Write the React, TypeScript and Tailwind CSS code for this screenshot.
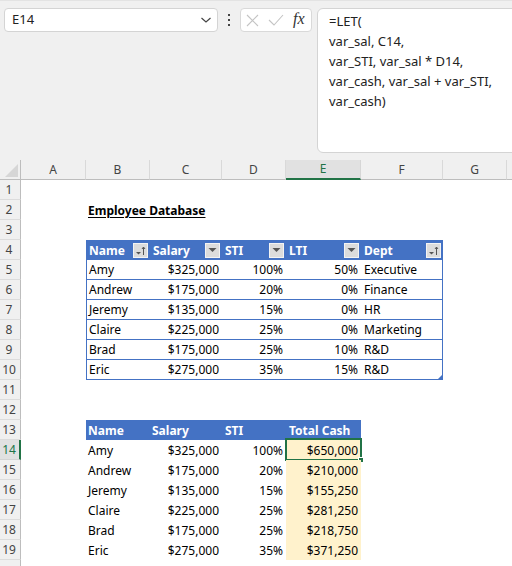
import React from 'react';

const GRID = 'grid grid-cols-[21px_65px_64px_72px_64px_75px_82px_64px_5px] h-[20px]';
const CELL = 'flex items-center whitespace-nowrap pt-[1px]';
const LINE = 'border-[#4472c4]';

const t1 = [
  ['Amy', '$325,000', '100%', '50%', 'Executive'],
  ['Andrew', '$175,000', '20%', '0%', 'Finance'],
  ['Jeremy', '$135,000', '15%', '0%', 'HR'],
  ['Claire', '$225,000', '25%', '0%', 'Marketing'],
  ['Brad', '$175,000', '25%', '10%', 'R&D'],
  ['Eric', '$275,000', '35%', '15%', 'R&D']
];

const t2 = [
  ['Amy', '$325,000', '100%', '$650,000'],
  ['Andrew', '$175,000', '20%', '$210,000'],
  ['Jeremy', '$135,000', '15%', '$155,250'],
  ['Claire', '$225,000', '25%', '$281,250'],
  ['Brad', '$175,000', '25%', '$218,750'],
  ['Eric', '$275,000', '35%', '$371,250']
];

function RowHead({ n, active }: { n?: number; active?: boolean }) {
  return active ? (
    <div className="flex items-center justify-center pr-[1px] bg-[#e1e1e1] text-[#217346] text-[12px] border-r-2 border-r-[#217346] border-b border-b-[#d4d4d4]">
      {n}
    </div>
  ) : (
    <div className="flex items-center justify-center pr-[2px] bg-[#f0f0f0] text-[#444] text-[12px] border-r border-r-[#bdbdbd] border-b border-b-[#dcdcdc]">
      {n}
    </div>
  );
}

function FilterBtn({ sort }: { sort?: boolean }) {
  return (
    <div className="w-[15px] h-[15px] bg-[#dcdcdc] border border-[#f3f3f3] flex items-center justify-center">
      {sort ? (
        <svg width="13" height="13" viewBox="0 0 13 13">
          <polygon points="2,8 7,8 4.5,10.5" fill="#555" />
          <path d="M9.5 11V3M8 5l1.5-2 1.5 2" stroke="#555" strokeWidth="1" fill="none" />
        </svg>
      ) : (
        <svg width="9" height="6" viewBox="0 0 9 6">
          <polygon points="0.5,1 8.5,1 4.5,5" fill="#555" />
        </svg>
      )}
    </div>
  );
}

function HeadCell({ label, sort }: { label: string; sort?: boolean }) {
  return (
    <div className="flex items-center whitespace-nowrap justify-between bg-[#4472c4] text-white font-bold pl-[3px] pr-[2px]">
      <span className="pt-[1px]">{label}</span>
      <FilterBtn sort={sort} />
    </div>
  );
}

function FormulaBar() {
  return (
    <div className="h-[160px] bg-[#f0f0f0] border-t border-[#e3e3e3] flex items-start pt-[7px] pl-[4px] font-['Noto_Sans',sans-serif] text-[13px] text-[#222]">
      <div className="w-[214px] h-[24px] shrink-0 bg-white rounded-[4px] border border-[#d4d4d4] flex items-center justify-between pl-[7px] pr-[5px]">
        <span>E14</span>
        <svg width="12" height="8" viewBox="0 0 12 8">
          <path d="M1.5 2l4.5 4 4.5-4" stroke="#444" strokeWidth="1.2" fill="none" />
        </svg>
      </div>
      <div className="w-[22px] h-[24px] shrink-0 flex flex-col items-center justify-center gap-[3px]">
        <span className="w-[2px] h-[2px] bg-[#444]" />
        <span className="w-[2px] h-[2px] bg-[#444]" />
        <span className="w-[2px] h-[2px] bg-[#444]" />
      </div>
      <div className="w-[72px] h-[24px] shrink-0 bg-white rounded-[4px] border border-[#d9d9d9] flex items-center pl-[5px] gap-[9px]">
        <svg width="13" height="13" viewBox="0 0 13 13">
          <path d="M1 1l11 11M12 1L1 12" stroke="#c4c4c4" strokeWidth="1.1" />
        </svg>
        <svg width="16" height="12" viewBox="0 0 16 12">
          <path d="M1 6l5 5 9-10" stroke="#c4c4c4" strokeWidth="1.1" fill="none" />
        </svg>
        <span className="font-['Liberation_Serif',serif] italic text-[16px] leading-none text-[#333] -mt-[2px]">fx</span>
      </div>
      <div className="ml-[5px] w-[210px] h-[145px] shrink-0 bg-white rounded-[6px] border border-[#d4d4d4] pl-[11px] pt-[2px] leading-[20px]">
        <div>=LET(</div>
        <div>var_sal, C14,</div>
        <div>var_STI, var_sal * D14,</div>
        <div>var_cash, var_sal + var_STI,</div>
        <div>var_cash)</div>
      </div>
    </div>
  );
}

function ColHeads() {
  const letters = ['A', 'B', 'C', 'D', 'E', 'F', 'G'];
  return (
    <div className={`${GRID} font-['Noto_Sans',sans-serif] text-[12px] text-[#444]`}>
      <div className="bg-[#f0f0f0] border-b border-r border-[#bdbdbd] flex items-end justify-end p-[2px]">
        <svg width="13" height="13" viewBox="0 0 13 13">
          <polygon points="13,0 13,13 0,13" fill="#d6d6d6" />
        </svg>
      </div>
      {letters.map((l) =>
        l === 'E' ? (
          <div key={l} className="flex items-center justify-center bg-[#e1e1e1] text-[#217346] border-r border-r-[#d6d6d6] border-b-2 border-b-[#217346]">
            {l}
          </div>
        ) : (
          <div key={l} className="flex items-center justify-center bg-[#f0f0f0] border-r border-r-[#d9d9d9] border-b border-b-[#bdbdbd]">
            {l}
          </div>
        )
      )}
      <div className="bg-[#f0f0f0] border-b border-b-[#bdbdbd]" />
    </div>
  );
}

function EmptyRow({ n }: { n?: number }) {
  return (
    <div className={GRID}>
      <RowHead n={n} />
    </div>
  );
}

export default function App() {
  return (
    <div className="w-[512px] h-[566px] overflow-hidden bg-white">
      <FormulaBar />
      <ColHeads />
      <div className="font-['Noto_Sans',sans-serif] text-[12px] text-black">
        <EmptyRow n={1} />
        <div className={GRID}>
          <RowHead n={2} />
          <div />
          <div className={`${CELL} pl-[2px] font-bold underline underline-offset-[2px]`}>Employee Database</div>
        </div>
        <EmptyRow n={3} />
        <div className={GRID}>
          <RowHead n={4} />
          <div />
          <HeadCell label="Name" sort />
          <HeadCell label="Salary" />
          <HeadCell label="STI" />
          <HeadCell label="LTI" />
          <HeadCell label="Dept" sort />
        </div>
        {t1.map((r, i) => (
          <div key={r[0]} className={GRID}>
            <RowHead n={5 + i} />
            <div />
            <div className={`${CELL} border-b border-l ${LINE} pl-[2px]`}>{r[0]}</div>
            <div className={`${CELL} border-b ${LINE} justify-end pr-[3px]`}>{r[1]}</div>
            <div className={`${CELL} border-b ${LINE} justify-end pr-[3px]`}>{r[2]}</div>
            <div className={`${CELL} border-b ${LINE} justify-end pr-[3px]`}>{r[3]}</div>
            <div className={`${CELL} relative border-b border-r ${LINE} pl-[3px]`}>
              {r[4]}
              {i === t1.length - 1 && (
                <svg className="absolute right-0 bottom-0" width="4" height="4" viewBox="0 0 4 4">
                  <polygon points="4,0 4,4 0,4" fill="#4472c4" />
                </svg>
              )}
            </div>
          </div>
        ))}
        <EmptyRow n={11} />
        <EmptyRow n={12} />
        <div className={GRID}>
          <RowHead n={13} />
          <div />
          <div className={`${CELL} bg-[#4472c4] text-white font-bold pl-[2px]`}>Name</div>
          <div className={`${CELL} bg-[#4472c4] text-white font-bold pl-[2px]`}>Salary</div>
          <div className={`${CELL} bg-[#4472c4] text-white font-bold pl-[3px]`}>STI</div>
          <div className={`${CELL} bg-[#4472c4] text-white font-bold pl-[3px]`}>Total Cash</div>
        </div>
        {t2.map((r, i) => (
          <div key={r[0]} className={GRID}>
            <RowHead n={14 + i} active={i === 0} />
            <div />
            <div className={`${CELL} pl-[2px]`}>{r[0]}</div>
            <div className={`${CELL} justify-end pr-[3px]`}>{r[1]}</div>
            <div className={`${CELL} justify-end pr-[3px]`}>{r[2]}</div>
            <div className={`${CELL} relative justify-end pr-[3px] bg-[#fff2cc]`}>
              {r[3]}
              {i === 0 && (
                <>
                  <div className="absolute top-[-2px] left-[-1px] right-[-1px] bottom-[-1px] border-2 border-[#217346]" />
                  <div className="absolute right-[-3px] bottom-[-3px] w-[6px] h-[6px] bg-[#217346] border border-white" />
                </>
              )}
            </div>
          </div>
        ))}
        <EmptyRow />
      </div>
    </div>
  );
}
